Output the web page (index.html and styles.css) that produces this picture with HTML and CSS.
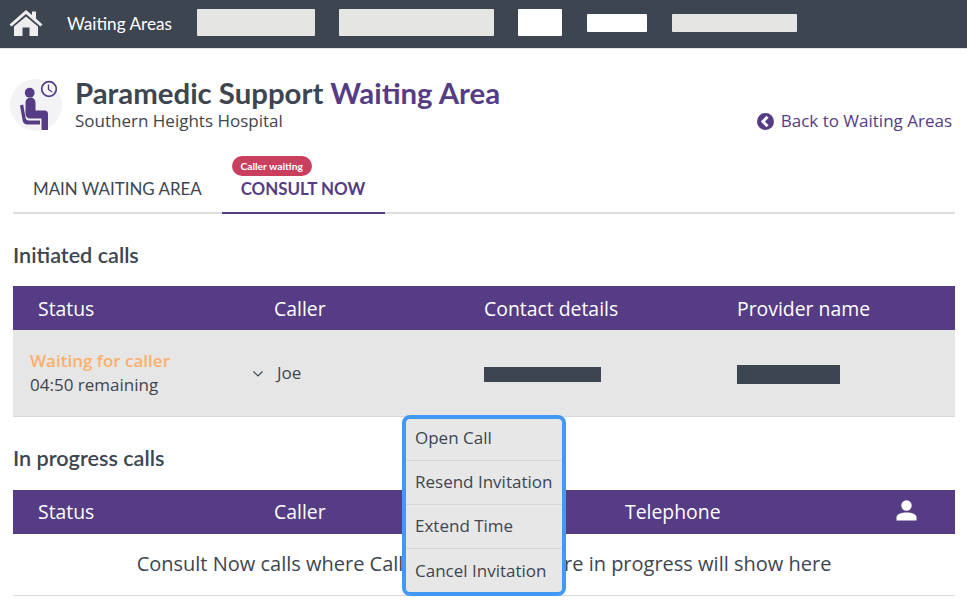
FILE: index.html
```html
<!DOCTYPE html>
<html lang="en">
<head>
    <meta charset="UTF-8">
    <title>Paramedic Support Waiting Area</title>
    <link rel="stylesheet" href="styles.css">
</head>
<body>
    <nav class="topbar">
        <a class="home-link" href="#">
            <svg width="34" height="28" viewBox="0 0 34 28"><path fill="#eeeeef" d="M17 1 L23 6 V2.500 H27 V9.500 L33.500 15.500 L31.500 17.500 L17 5 L2.500 17.500 L0.500 15.500 Z M17 7.500 L29 17.500 V27 H20.500 V18.500 H13.500 V27 H5 V17.500 Z"/></svg>
        </a>
        <a class="nav-text" href="#">Waiting Areas</a>
        <span class="redact grey r1"></span>
        <span class="redact grey r2"></span>
        <span class="redact white r3"></span>
        <span class="redact white r4"></span>
        <span class="redact grey r5"></span>
    </nav>

    <main class="page">
        <header class="page-head">
            <div class="area-icon">
                <svg width="52" height="52" viewBox="0 0 52 52">
                    <circle cx="26" cy="26" r="26" fill="#f3f3f6"/>
                    <circle cx="19.700" cy="13.700" r="4.900" fill="#553c85"/>
                    <path fill="#553c85" d="M15.500 23.500 a5 5 0 0 1 10 0 V31.500 H34.500 a3.500 3.500 0 0 1 3.500 3.500 V51 H31.500 V39.500 H20 a4.500 4.500 0 0 1 -4.500 -4.500 Z"/>
                    <path fill="#553c85" d="M10 26.500 L13.200 25.500 L15.500 38.500 a3.500 3.500 0 0 0 3.500 3 H30 V45.500 H17.500 a5 5 0 0 1 -4.800 -3.800 Z"/>
                    <circle cx="39" cy="10" r="7.300" fill="#f8f8fa" stroke="#553c85" stroke-width="1.700"/>
                    <path fill="none" stroke="#553c85" stroke-width="1.400" d="M38.500 5.500 V10.500 L42 13"/>
                </svg>
            </div>
            <div class="titles">
                <h1>Paramedic Support <span class="accent">Waiting Area</span></h1>
                <p class="hospital">Southern Heights Hospital</p>
            </div>
            <a class="back-link" href="#">
                <svg width="17" height="17" viewBox="0 0 17 17"><circle cx="8.500" cy="8.500" r="8.500" fill="#553c85"/><path fill="none" stroke="#fff" stroke-width="3" d="M10.500 3.800 L6 8.500 L10.500 13.200"/></svg>
                Back to Waiting Areas
            </a>
        </header>

        <div class="tabs">
            <a class="tab" href="#">MAIN WAITING AREA</a>
            <a class="tab active" href="#">
                <span class="badge">Caller waiting</span>
                CONSULT NOW
            </a>
        </div>

        <h2>Initiated calls</h2>
        <table class="calls initiated">
            <colgroup>
                <col class="c1"><col class="c2"><col class="c3"><col>
            </colgroup>
            <tr>
                <th>Status</th>
                <th>Caller</th>
                <th>Contact details</th>
                <th>Provider name</th>
            </tr>
            <tr class="call-row">
                <td>
                    <div class="state">Waiting for caller</div>
                    <div>04:50 remaining</div>
                </td>
                <td class="caller-cell">
                    <svg class="chev" width="10" height="6" viewBox="0 0 10 6"><path fill="none" stroke="#3d4551" stroke-width="1.200" d="M0.500 0.500 L5 5 L9.500 0.500"/></svg>Joe
                </td>
                <td><span class="redact dark d1"></span></td>
                <td><span class="redact dark d2"></span></td>
            </tr>
        </table>

        <h2 class="second">In progress calls</h2>
        <table class="calls progress">
            <colgroup>
                <col class="c1"><col class="c2b"><col class="c3b"><col>
            </colgroup>
            <tr>
                <th>Status</th>
                <th>Caller</th>
                <th>Telephone</th>
                <th class="icon-col">
                    <svg width="21" height="21" viewBox="0 0 21 21"><circle cx="10.500" cy="5.500" r="5.200" fill="#fff"/><path fill="#fff" d="M0.500 20.500 V17.500 C0.500 14 5 12.500 10.500 12.500 C16 12.500 20.500 14 20.500 17.500 V20.500 Z"/></svg>
                </th>
            </tr>
            <tr class="empty-row">
                <td colspan="4">Consult Now calls where Caller and Provider are in progress will show here</td>
            </tr>
        </table>

        <ul class="menu">
            <li>Open Call</li>
            <li>Resend Invitation</li>
            <li>Extend Time</li>
            <li>Cancel Invitation</li>
        </ul>
    </main>
</body>
</html>
```

FILE: styles.css
```css
* {
    margin: 0;
    padding: 0;
    box-sizing: border-box;
}
html, body {
    height: 609px;
    overflow: hidden;
}
body {
    background-color: white;
    color: #3d4551;
    font-family: "Open Sans", sans-serif;
    font-size: 17px;
}
a {
    text-decoration: none;
    color: inherit;
}
.topbar {
    display: flex;
    align-items: center;
    height: 49px;
    background-color: #3d4551;
    border-bottom: 1px solid #e4e4e6;
}
.home-link {
    display: flex;
    margin: 0 0 3px 9px;
}
.nav-text {
    margin-left: 24px;
    width: 130px;
    color: white;
    font-family: Lato, sans-serif;
    font-size: 17.2px;
    margin-bottom: 1px;
}
.redact {
    display: inline-block;
    border-radius: 1px;
}
.grey {
    background-color: #e5e5e3;
}
.white {
    background-color: white;
}
.r1 { width: 118px; height: 27px; margin-bottom: 3px; }
.r2 { width: 155px; height: 27px; margin: 0 0 3px 24px; }
.r3 { width: 44px; height: 27px; margin: 0 0 3px 24px; }
.r4 { width: 60px; height: 18px; margin: 0 0 3px 25px; }
.r5 { width: 125px; height: 18px; margin: 0 0 3px 25px; }

.page {
    position: relative;
    padding: 0 12px 0 13px;
}
.page-head {
    display: flex;
    align-items: flex-start;
    height: 102px;
    padding-top: 30px;
    margin-left: -3px;
}
.area-icon {
    width: 52px;
    height: 52px;
}
.titles {
    margin: -1px 0 0 13px;
}
h1 {
    font-family: Lato, sans-serif;
    font-size: 29.35px;
    font-weight: 700;
    line-height: 30px;
}
.accent {
    color: #553c85;
}
.hospital {
    font-size: 17px;
    line-height: 24px;
    margin-top: 1px;
}
.back-link {
    display: flex;
    align-items: center;
    gap: 7px;
    margin-left: auto;
    margin-right: 3px;
    margin-top: 31px;
    color: #553c85;
    font-size: 17px;
    line-height: 22px;
}
.tabs {
    display: flex;
    height: 63px;
    border-bottom: 2px solid #dedede;
}
.tab {
    position: relative;
    display: flex;
    align-items: flex-end;
    height: 63px;
    padding: 0 20px 14px;
    font-family: Lato, sans-serif;
    font-size: 16.9px;
    line-height: 22px;
    color: #3d4551;
}
.tab.active {
    padding: 0 20px 12px 19px;
    color: #553c85;
    font-weight: 700;
    border-bottom: 2px solid #553c85;
}
.badge {
    position: absolute;
    left: 10px;
    top: 5px;
    height: 20px;
    width: 80px;
    border-radius: 10px;
    background-color: #c9405f;
    color: white;
    font-size: 10.3px;
    font-weight: 700;
    font-family: Lato, sans-serif;
    line-height: 20px;
    text-align: center;
}
h2 {
    font-family: Lato, sans-serif;
    font-size: 21.6px;
    font-weight: 600;
    line-height: 26px;
    margin: 28px 0 18px;
}
h2.second {
    margin: 28px 0 19px;
}
table.calls {
    width: 942px;
    table-layout: fixed;
    border-collapse: collapse;
}
col.c1 { width: 236px; }
col.c2 { width: 210px; }
col.c3 { width: 253px; }
col.c2b { width: 351px; }
col.c3b { width: 257px; }
.calls th {
    height: 44px;
    padding-left: 25px;
    background-color: #553c85;
    color: white;
    font-size: 19.4px;
    font-weight: 400;
    text-align: left;
}
.calls th.icon-col {
    padding: 0;
    text-align: center;
}
.icon-col svg {
    display: block;
    margin: 0 auto 2px;
}
.call-row td {
    height: 86px;
    padding-left: 17px;
    background-color: #e6e6e6;
    border-bottom: 1px solid #d8d8d8;
    line-height: 24px;
    vertical-align: middle;
}
.call-row td + td {
    padding-left: 25px;
}
.call-row .caller-cell {
    padding-left: 4px;
}
.state {
    color: #fbb06c;
    font-weight: 600;
}
.chev {
    margin-right: 14px;
    vertical-align: 2px;
}
.dark {
    background-color: #3d4551;
    border-radius: 0;
    height: 15px;
    vertical-align: middle;
}
.d1 { width: 117px; }
.d2 { width: 103px; height: 19px; }
.empty-row td {
    height: 62px;
    padding-bottom: 2px;
    text-align: center;
    font-size: 20px;
    border-bottom: 1px solid #d8d8d8;
}
.menu {
    position: absolute;
    left: 402px;
    top: 366px;
    width: 164px;
    height: 181px;
    list-style: none;
    background-color: #e7e7e7;
    border: 4px solid #4299f5;
    border-radius: 8px;
}
.menu li {
    height: 44px;
    padding-left: 9px;
    font-size: 17px;
    line-height: 42px;
    border-bottom: 1px solid #d6d6d6;
}
.menu li:first-child {
    height: 42px;
    line-height: 38px;
}
.menu li:last-child {
    line-height: 44px;
    border-bottom: none;
}
```
